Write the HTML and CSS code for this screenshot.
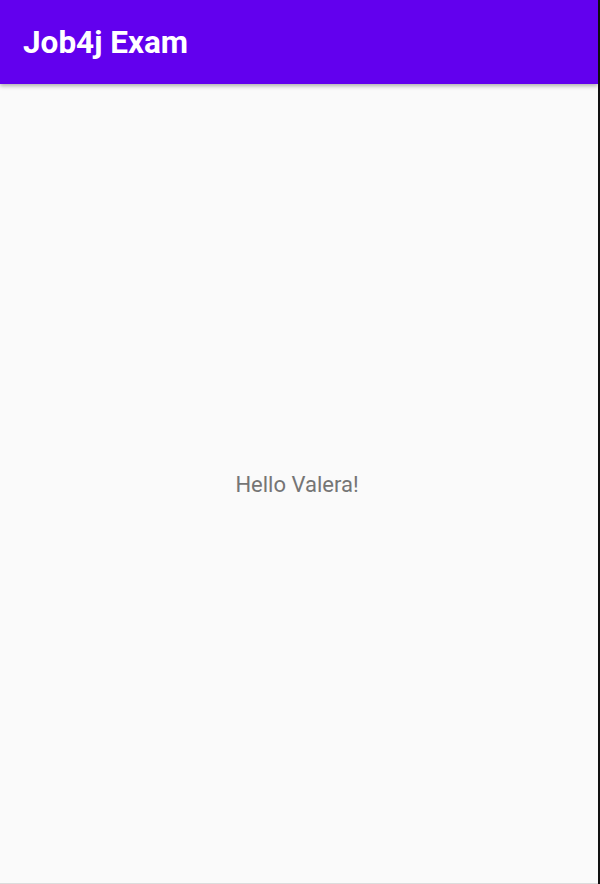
FILE: index.html
```html
<!DOCTYPE html>
<html>
<head>
<meta charset="utf-8">
<link rel="stylesheet" href="styles.css">
</head>
<body>
<div class="screen">
  <header class="appbar"><h1 class="title">Job4j Exam</h1></header>
  <main class="content"><p class="hello">Hello Valera!</p></main>
</div>
<div class="edge"></div>
</body>
</html>
```
FILE: styles.css
```css
html, body { margin: 0; padding: 0; }
body {
  width: 600px;
  height: 884px;
  display: flex;
  background: #fafafa;
  font-family: Roboto, "Noto Sans", sans-serif;
  overflow: hidden;
}
.screen {
  flex: 1;
  display: flex;
  flex-direction: column;
  height: 883px;
  border-bottom: 1px solid #dcdcdc;
}
.edge {
  width: 2px;
  background: #111;
}
.appbar {
  height: 84px;
  flex: none;
  background: #6200ee;
  display: flex;
  align-items: center;
  padding-left: 23px;
  box-shadow: 0 2px 4px rgba(0,0,0,0.3);
  position: relative;
  z-index: 1;
}
.title {
  margin: 0;
  color: #fff;
  font-size: 31.5px;
  font-weight: 700;
}
.content {
  flex: 1;
  display: flex;
  align-items: center;
  justify-content: center;
  padding-top: 2px;
  padding-right: 4px;
}
.hello {
  margin: 0;
  font-size: 22px;
  color: #757575;
}
```
